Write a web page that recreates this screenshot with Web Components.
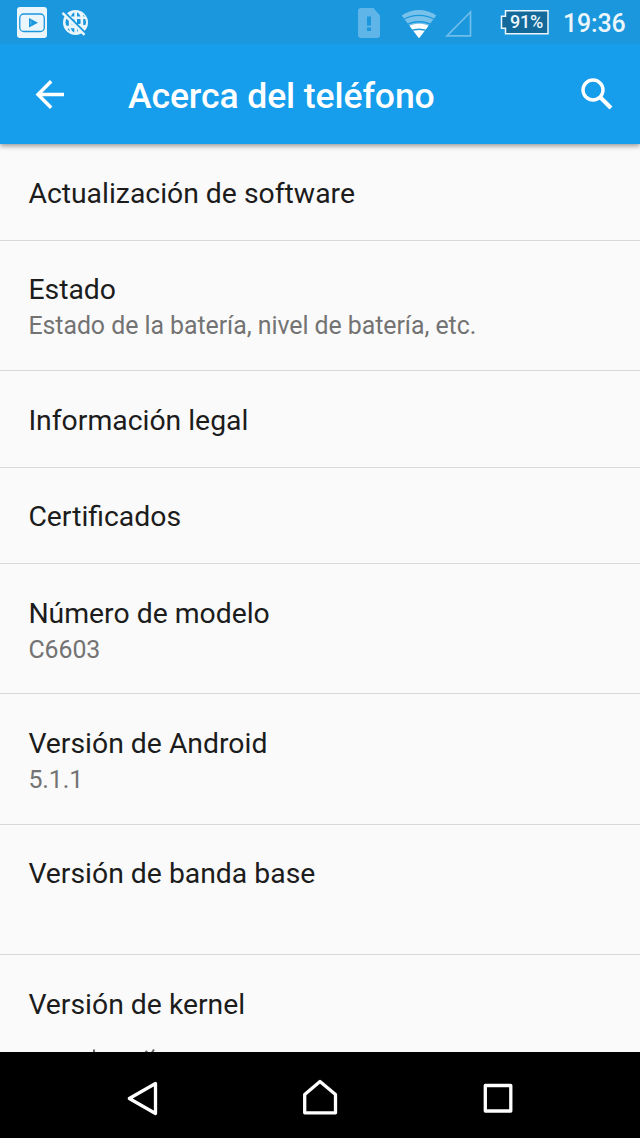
<!DOCTYPE html>
<html lang="es"><head><meta charset="utf-8"><title>Acerca del teléfono</title>
<style>html,body{margin:0;height:1138px;overflow:hidden}body{font-family:Roboto,sans-serif}</style></head>
<body><phone-screen></phone-screen>
<script>
const define=(name,html)=>{const t=document.createElement('template');t.innerHTML=html;
customElements.define(name,class extends HTMLElement{constructor(){super();this.attachShadow({mode:'open'}).append(t.content.cloneNode(true))}})};
define('status-bar',`<style>
:host{display:flex;height:44px;background:#1b97dd;color:#eaf5fc;align-items:center;box-sizing:border-box}
svg{display:block;flex:none}
.spacer{flex:1}
.battery{display:grid;width:49px;height:25px;margin-left:28px;margin-right:14px}
.battery>*{grid-area:1/1}
.battery span{font-size:18px;line-height:24px;font-weight:500;padding-left:10px;letter-spacing:-.2px}
time{font-size:24.9px;font-weight:500;line-height:44px;width:63px;margin-right:14px;padding-top:4px;white-space:nowrap;letter-spacing:-.1px}
</style>
<svg width="90" height="44" viewBox="0 0 90 44"><rect x="17" y="7" width="30" height="31" rx="3" fill="#eaf5fc"/><rect x="19.8" y="14" width="24.5" height="17.5" rx="4" fill="none" stroke="#1b97dd" stroke-width="1.3"/><path d="M29 18v9.5l9-4.7z" fill="#1b97dd"/><path d="M30.800 20.500v4" stroke="#88c8ee" stroke-width=".7"/>
<circle cx="75.5" cy="22.5" r="12.5" fill="#eaf5fc"/><g fill="#1b97dd"><path d="M74.300 12.300v4.300h-3.500q1.200-3.500 3.500-4.300zM77 12.300v4.300h3.500q-1.200-3.500-3.500-4.300zM66.500 18.800h2.500q-.5 3.500 0 7h-2.500q-2-3.500 0-7zM71.600 19.500h3v5h-3zM77 19h3.400q.5 3.500 0 5H77zM83.200 19h2q1.800 3 .2 6h-2.200zM70.600 28.300h3.700v4.300q-2.500-1-3.700-4.300zM77 28.300h2l-2 4zM83 14.600l2 2h-1.500zM67.500 29l2.500 2.500-1-3z"/></g><path d="M64 12.300L86 34.300" stroke="#1b97dd" stroke-width="3.200"/><path d="M62.500 12.800L84.500 34.800" stroke="#eaf5fc" stroke-width="2.400"/></svg>
<div class="spacer"></div>
<svg width="116" height="44" viewBox="356 0 116 44"><path fill="#5fb5e8" fill-rule="evenodd" d="M361 8h12.500l6.500 7.500V35q0 3-3 3h-16q-3 0-3-3V11q0-3 3-3zM367 16.500h4v9h-4zM367 27.500h4v3.500h-4z"/>
<clipPath id="fan"><path d="M401.300 15L410 4h18l8.700 11L419 38.300z"/></clipPath><g clip-path="url(#fan)"><path fill="#78c1eb" d="M398 18q21-16 42 0L419 40z"/><path d="M404 29q15-10.500 30 0L419 40z" fill="#fff"/><g fill="none" stroke="#1b97dd" stroke-width="1.300"><path d="M400 21.300q19-12 38 0"/><path d="M403 26.500q16-9.500 32 0"/><path d="M407 32.500q12-6.500 24 0"/></g></g>
<path d="M447 35.800L470.500 12v23.800z" fill="none" stroke="#6fbdea" stroke-width="1.7"/></svg>
<div class="battery"><svg width="49" height="25"><path d="M5.500 .8h42.500v23H5.500v-5.500H1.500V6.300h4z" fill="#12699a" stroke="#eaf5fc" stroke-width="1.5"/></svg><span>91%</span></div><time>19:36</time>`);
define('app-bar',`<style>
:host{display:flex;height:100px;background:#169dec;color:#fff;align-items:center;position:relative;z-index:1;box-shadow:0 2px 5px rgba(0,0,0,.4);clip-path:inset(0 0 -12px 0)}
svg{display:block;flex:none}
h1{margin:0;font-size:35.56px;font-weight:500;line-height:42px;flex:1;padding-top:4px;white-space:nowrap;letter-spacing:-.1px}
</style><svg width="128" height="100" fill="none" stroke="#fff" stroke-width="3.500"><path d="M64 50.500H38M51.200 37.300L38 50.500l13.200 13.200"/></svg><h1><slot></slot></h1>
<svg width="64" height="100" fill="none" stroke="#fff"><circle cx="17" cy="46" r="10" stroke-width="3.400"/><path d="M24.500 53.500L35 64" stroke-width="4"/></svg>`);
define('settings-row',`<style>
:host{display:block;box-sizing:border-box;height:96.400px;border-bottom:1px solid #d8d8d8;padding:32.700px 28.400px 0;flex:none}
:host([tall]){height:130.350px}
.title{font-size:28.350px;line-height:34px;color:#1c1c1c;white-space:nowrap}
.summary{font-size:24.890px;line-height:30px;color:#737373;padding-top:4px;white-space:nowrap;letter-spacing:-.04px}
</style><div class="title"><slot></slot></div><div class="summary"><slot name="summary"></slot></div>`);
define('nav-bar',`<style>:host{display:grid;grid-template-columns:53px 1fr 1fr 1fr 53px;height:86px;background:#000}svg{display:block;margin:auto}svg path,svg rect{fill:none;stroke:#fff;stroke-width:3.300;stroke-linejoin:round}</style>
<i></i><svg width="40" height="86"><path d="M33.500 31.500v30L7.300 46.500z"/></svg><svg width="40" height="86"><path d="M4.700 60.800V42.500L20 29.500l15.500 13v18.300z"/></svg><svg width="40" height="86"><rect x="7.300" y="33.500" width="25.500" height="25.500"/></svg><i></i>`);
define('phone-screen',`<style>
:host{display:flex;flex-direction:column;width:640px;height:1138px;overflow:hidden;background:#fafafa}
main{flex:1;min-height:0;overflow:hidden;display:flex;flex-direction:column;padding-top:.4px;box-sizing:border-box}
.cut{display:block;margin-top:19px;margin-left:-28.400px}
</style><status-bar></status-bar><app-bar>Acerca del teléfono</app-bar><main>
<settings-row>Actualización de software</settings-row>
<settings-row tall>Estado<span slot="summary">Estado de la batería, nivel de batería, etc.</span></settings-row>
<settings-row>Información legal</settings-row>
<settings-row>Certificados</settings-row>
<settings-row tall>Número de modelo<span slot="summary">C6603</span></settings-row>
<settings-row tall>Versión de Android<span slot="summary">5.1.1</span></settings-row>
<settings-row tall>Versión de banda base</settings-row>
<settings-row tall>Versión de kernel<svg class="cut" slot="summary" width="170" height="12" stroke="#666" stroke-width="2" fill="none"><path d="M94 4.500v7M145.500 6l3 2.500M154 4.500l-3 4.500"/></svg></settings-row></main><nav-bar></nav-bar>`);
</script></body></html>
